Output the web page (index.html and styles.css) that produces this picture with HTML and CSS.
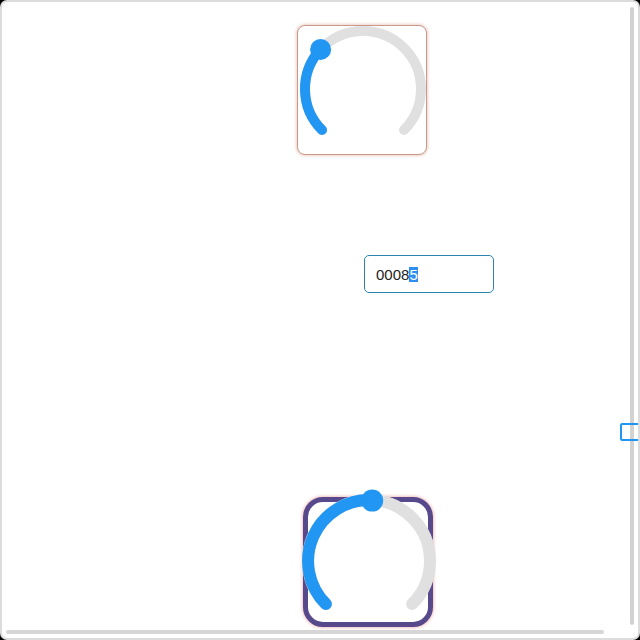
FILE: index.html
```html
<!DOCTYPE html>
<html>
<head>
<meta charset="utf-8">
<link rel="stylesheet" href="styles.css">
</head>
<body>
<div class="frame">
  <div class="stage">
    <div class="knob knob-a">
      <svg class="dial" width="130" height="130" viewBox="0 0 130 130">
        <path d="M25 105 A58 58 0 1 1 107 105" class="track" stroke-width="10"/>
        <path d="M25 105 A58 58 0 0 1 23.6 24.4" class="fill" stroke-width="10"/>
        <circle cx="23.6" cy="24.4" r="10.5" class="handle"/>
      </svg>
    </div>
    <div class="field"><span>0008</span><span class="sel">5</span></div>
    <div class="knob knob-b">
      <svg class="dial" width="130" height="130" viewBox="0 0 130 130">
        <path d="M22.9 107.1 A61 61 0 1 1 109.1 107.1" class="track" stroke-width="12"/>
        <path d="M22.9 107.1 A61 61 0 0 1 69.2 3.1" class="fill" stroke-width="12"/>
        <circle cx="69.2" cy="3.6" r="11" class="handle"/>
      </svg>
    </div>
  </div>
  <div class="vbar"></div>
  <div class="hbar"></div>
  <div class="peek"></div>
</div>
</body>
</html>
```
FILE: styles.css
```css
html, body {
  margin: 0;
  padding: 0;
  background: #000;
}
.frame {
  position: relative;
  width: 640px;
  height: 640px;
  box-sizing: border-box;
  border: 2px solid #dcdcdc;
  border-radius: 7px;
  background: #fff;
  overflow: hidden;
}
.stage {
  display: flex;
  flex-direction: column;
  align-items: flex-start;
  padding-top: 23px;
}
.knob {
  position: relative;
  width: 130px;
  height: 130px;
  box-sizing: border-box;
  background: #fff;
}
.knob-a {
  margin-left: 295px;
  border: 1px solid #c99a8a;
  border-radius: 8px;
  box-shadow: 0 0 3px 1px rgba(205, 140, 120, 0.4);
}
.knob-a .dial {
  position: absolute;
  left: -1px;
  top: -1px;
}
.knob-b {
  margin-left: 301px;
  margin-top: 204px;
  border: 5px solid #574a8c;
  border-radius: 20px;
  box-shadow: 0 0 3px 1px rgba(240, 165, 165, 0.7);
}
.knob-b .dial {
  position: absolute;
  left: -5px;
  top: -5px;
}
.dial {
  overflow: visible;
}
.track {
  fill: none;
  stroke: #e0e0e0;
  stroke-linecap: round;
}
.fill {
  fill: none;
  stroke: #2196f3;
  stroke-linecap: round;
}
.handle {
  fill: #2196f3;
}
.field {
  margin-left: 362px;
  margin-top: 100px;
  width: 130px;
  height: 38px;
  box-sizing: border-box;
  border: 1px solid #2a84ae;
  border-radius: 5px;
  padding: 0 0 0 11px;
  display: flex;
  align-items: center;
  font-family: "Liberation Sans", Arial, sans-serif;
  font-size: 15px;
  color: #222;
}
.sel {
  background: #2f8ff0;
  color: #fff;
  line-height: 15px;
}
.peek {
  position: absolute;
  left: 618px;
  top: 421px;
  width: 30px;
  height: 18px;
  box-sizing: border-box;
  border: 2px solid #2196f3;
  border-radius: 2px;
}
.vbar {
  position: absolute;
  left: 628px;
  top: 5px;
  width: 4px;
  height: 618px;
  border-radius: 2px;
  background: #d2d2d2;
}
.hbar {
  position: absolute;
  left: 4px;
  top: 628px;
  width: 598px;
  height: 4px;
  border-radius: 2px;
  background: #d6d6d6;
}
```
